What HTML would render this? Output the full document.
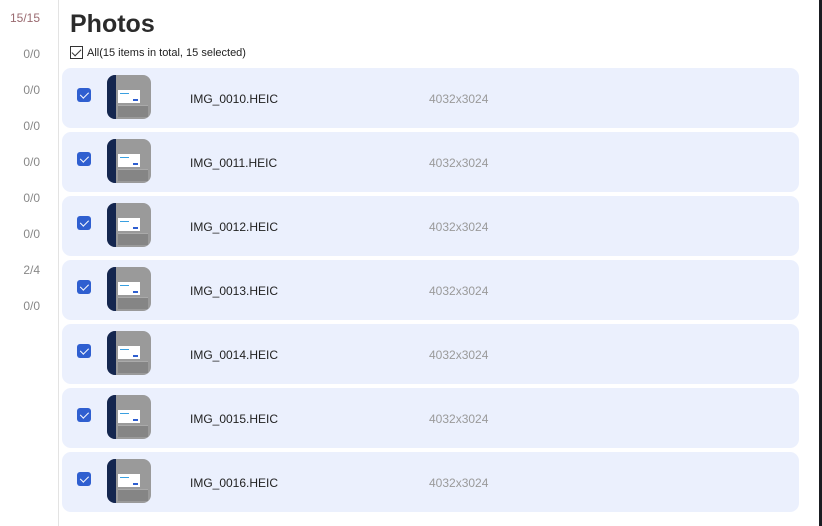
<!DOCTYPE html>
<html><head><meta charset="utf-8"><style>
*{margin:0;padding:0;box-sizing:border-box}
body{width:822px;height:526px;background:#fff;font-family:"Liberation Sans",sans-serif;position:relative;overflow:hidden}
.side{position:absolute;left:0;top:0;width:59px;height:526px;border-right:1px solid #e3e3e3}
.side div{position:absolute;right:18px;font-size:12px;color:#888}
.bar{position:absolute;left:819px;top:0;width:3px;height:526px;background:#1a1d22}
h1{position:absolute;left:70px;top:10px;font-size:25px;font-weight:bold;color:#2b2b2b}
.all{position:absolute;left:70px;top:46px;font-size:11px;color:#222;display:flex;align-items:center}
.all .cb{width:13px;height:13px;border:1px solid #333;margin-right:4px;position:relative;background:#fff}
.all .cb:after{content:"";position:absolute;left:3px;top:0px;width:4px;height:8px;border:solid #333;border-width:0 1.5px 1.5px 0;transform:rotate(45deg)}
.row{position:absolute;left:62px;width:737px;height:60px;background:#ebf0fd;border-radius:9px}
.row .ck{position:absolute;left:15px;top:20px;width:14px;height:14px;background:#2f5fd0;border-radius:3px}
.row .ck:after{content:"";position:absolute;left:4.5px;top:1.5px;width:3.5px;height:7px;border:solid #fff;border-width:0 1.5px 1.5px 0;transform:rotate(45deg)}
.th{position:absolute;left:45px;top:7px;width:44px;height:44px;border-radius:8px;overflow:hidden;background:#9a9a9a}
.th .l{position:absolute;left:0;top:0;width:9px;height:44px;background:#14264f}
.th .w{position:absolute;left:11px;top:15px;width:22px;height:13px;background:#fff}
.th .w:after{content:"";position:absolute;right:2px;bottom:2px;width:5px;height:2px;background:#2f5fd0}
.th .w:before{content:"";position:absolute;left:2px;top:3px;width:9px;height:1px;background:#3aa0e0}
.th .g{position:absolute;left:11px;top:30px;width:30px;height:12px;background:#858585;border-top:1px solid #aaa}
.nm{position:absolute;left:128px;top:24px;font-size:12px;color:#222}
.sz{position:absolute;left:367px;top:24px;font-size:12px;color:#9a9a9a}
</style></head><body>
<div class="side">
<div style="top:11px;color:#9a6a70">15/15</div>
<div style="top:47px">0/0</div><div style="top:83px">0/0</div><div style="top:119px">0/0</div>
<div style="top:155px">0/0</div><div style="top:191px">0/0</div><div style="top:227px">0/0</div>
<div style="top:263px">2/4</div><div style="top:299px">0/0</div>
</div>
<div class="bar"></div>
<h1>Photos</h1>
<div class="all"><span class="cb"></span>All(15 items in total, 15 selected)</div>

<div class="row" style="top:68px"><div class="ck"></div><div class="th"><div class="l"></div><div class="w"></div><div class="g"></div></div><div class="nm">IMG_0010.HEIC</div><div class="sz">4032x3024</div></div>
<div class="row" style="top:132px"><div class="ck"></div><div class="th"><div class="l"></div><div class="w"></div><div class="g"></div></div><div class="nm">IMG_0011.HEIC</div><div class="sz">4032x3024</div></div>
<div class="row" style="top:196px"><div class="ck"></div><div class="th"><div class="l"></div><div class="w"></div><div class="g"></div></div><div class="nm">IMG_0012.HEIC</div><div class="sz">4032x3024</div></div>
<div class="row" style="top:260px"><div class="ck"></div><div class="th"><div class="l"></div><div class="w"></div><div class="g"></div></div><div class="nm">IMG_0013.HEIC</div><div class="sz">4032x3024</div></div>
<div class="row" style="top:324px"><div class="ck"></div><div class="th"><div class="l"></div><div class="w"></div><div class="g"></div></div><div class="nm">IMG_0014.HEIC</div><div class="sz">4032x3024</div></div>
<div class="row" style="top:388px"><div class="ck"></div><div class="th"><div class="l"></div><div class="w"></div><div class="g"></div></div><div class="nm">IMG_0015.HEIC</div><div class="sz">4032x3024</div></div>
<div class="row" style="top:452px"><div class="ck"></div><div class="th"><div class="l"></div><div class="w"></div><div class="g"></div></div><div class="nm">IMG_0016.HEIC</div><div class="sz">4032x3024</div></div>
</body></html>
